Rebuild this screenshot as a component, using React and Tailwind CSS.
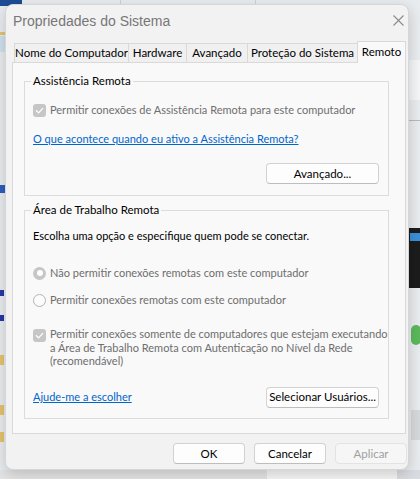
import React from 'react';

const font = "font-['Lato','Liberation_Sans',Arial,sans-serif]";

const Check = () => (
  <svg width="9" height="9" viewBox="0 0 10 10" fill="none">
    <path d="M1.5 5.2 L4 7.6 L8.6 2.6" stroke="white" strokeWidth="1.4" strokeLinecap="round" strokeLinejoin="round" />
  </svg>
);

const Checkbox = () => (
  <span className="w-[13px] h-[13px] shrink-0 rounded-[3px] bg-[#c6c6c6] flex items-center justify-center">
    <Check />
  </span>
);

const Radio = ({ checked }) =>
  checked ? (
    <span className="w-[13px] h-[13px] shrink-0 rounded-full bg-[#c6c6c6] flex items-center justify-center">
      <span className="w-[6px] h-[6px] rounded-full bg-white" />
    </span>
  ) : (
    <span className="w-[13px] h-[13px] shrink-0 rounded-full border border-[#b3b3b3] bg-[#fcfcfc]" />
  );

const Button = ({ children, className = '', disabled }) => (
  <button
    className={`h-[21px] rounded-[4px] border text-[11.5px] leading-none whitespace-nowrap flex items-center justify-center ${
      disabled
        ? 'border-[#e3e3e3] bg-[#f6f6f6] text-[#a0a0a0]'
        : 'border-[#d2d2d2] border-b-[#bdbdbd] bg-[#fdfdfd] text-black'
    } ${className}`}
  >
    {children}
  </button>
);

const Group = ({ title, children, className = '' }) => (
  <div className={`relative border border-[#dcdcdc] pl-[8px] pr-[9px] ${className}`}>
    <span className="absolute -top-[8px] left-[6px] px-[2px] bg-[#f9f9f9] text-[11.5px] leading-[14px] text-black whitespace-nowrap">
      {title}
    </span>
    {children}
  </div>
);

const tabs = [
  { label: 'Nome do Computador', w: 'w-[114px]' },
  { label: 'Hardware', w: 'w-[58px]' },
  { label: 'Avançado', w: 'w-[61px]' },
  { label: 'Proteção do Sistema', w: 'w-[110px]' },
];

export default function App() {
  return (
    <div className={`relative w-[420px] h-[479px] overflow-hidden bg-[#e9ecef] ${font}`}>
      {/* desktop behind the dialog */}
      <div className="absolute left-0 top-0 w-[22px] h-[6px] bg-[#1d4c96]" />
      <div className="absolute left-[120px] top-0 w-px h-[6px] bg-[#c9d3de]" />
      <div className="absolute left-[255px] top-0 w-px h-[6px] bg-[#c9d3de]" />
      <div className="absolute left-0 top-[32px] w-[5px] h-[3px] bg-[#e4c36b]" />
      <div className="absolute left-0 top-[36px] w-[5px] h-[16px] bg-[#cfe0ee]" />
      <div className="absolute left-0 top-[185px] w-[5px] h-[8px] bg-[#2d5fbf]" />
      <div className="absolute left-0 top-[290px] w-[4px] h-[6px] bg-[#2438a8]" />
      <div className="absolute left-0 top-[315px] w-[4px] h-[6px] bg-[#2438a8]" />
      <div className="absolute left-0 top-[355px] w-[4px] h-[10px] bg-[#e4c36b]" />
      <div className="absolute left-0 top-[405px] w-[4px] h-[10px] bg-[#e4c36b]" />
      <div className="absolute left-0 top-[432px] w-[4px] h-[10px] bg-[#e4c36b]" />
      <div className="absolute left-[409px] top-[60px] w-[11px] h-[40px] bg-[#f4f5f7]" />
      <div className="absolute left-[409px] top-[120px] w-[11px] h-px bg-[#b9b9b9]" />
      <div className="absolute left-[409px] top-[228px] w-[11px] h-[60px] bg-[#1c1c1c]" />
      <div className="absolute left-[410px] top-[233px] w-[10px] h-[8px] bg-[#3b8fd6]" />
      <div className="absolute left-[411px] top-[325px] w-[10px] h-[20px] rounded-full bg-[#5cb85c]" />
      <div className="absolute left-[411px] top-[410px] w-[9px] h-[30px] bg-[#d6d9dc]" />
      <div className="absolute left-0 top-[470px] w-[267px] h-[9px] bg-[#e4e4e4]" />
      <div className="absolute left-[267px] top-[470px] w-[130px] h-[9px] bg-[#f6f6f6]" />
      <div className="absolute left-[397px] top-[470px] w-[23px] h-[9px] bg-[#d9dce0]" />

      {/* dialog */}
      <div className="absolute left-[5px] top-[4px] w-[404px] h-[466px] rounded-[8px] bg-[#f2f2f2] border border-[#d6d6d6] shadow-[0_4px_14px_rgba(0,0,0,0.18)] flex flex-col">
        <div className="h-[31px] flex items-center justify-between pl-[7px] pr-[4px]">
          <span className="font-['Liberation_Sans',Arial,sans-serif] text-[14px] text-[#777777] leading-none">
            Propriedades do Sistema
          </span>
          <svg width="11" height="11" viewBox="0 0 11 11">
            <path d="M0.5 0.5 L10.5 10.5 M10.5 0.5 L0.5 10.5" stroke="#8a8a8a" strokeWidth="1.1" />
          </svg>
        </div>

        <div className="mt-[5px] ml-[6px] mr-[2px] flex flex-col">
          <div className="h-[21px] flex items-end pl-[2px]">
            {tabs.map((t) => (
              <div
                key={t.label}
                className={`${t.w} h-[19px] border-t border-l border-[#d9d9d9] bg-[#f0f0f0] text-[11.5px] text-black whitespace-nowrap flex items-center justify-center leading-none`}
              >
                {t.label}
              </div>
            ))}
            <div className="relative z-10 w-[49px] h-[22px] -mb-px border-t border-l border-r border-[#d9d9d9] bg-[#f9f9f9] text-[11.5px] text-black flex items-start justify-center pt-[4px] leading-none">
              Remoto
            </div>
          </div>

          <div className="h-[372px] border border-[#d9d9d9] bg-[#f9f9f9] pl-[11px] pr-[16px] pt-[18px] text-[11px]">
            <Group title="Assistência Remota" className="pt-[21px] pb-[11px]">
              <div className="h-[14px] flex items-center gap-[4px] text-[#6e6e6e] whitespace-nowrap">
                <Checkbox />
                <span>Permitir conexões de Assistência Remota para este computador</span>
              </div>
              <div className="mt-[15px] h-[14px] flex items-center text-[#0066cc] underline whitespace-nowrap">
                O que acontece quando eu ativo a Assistência Remota?
              </div>
              <div className="mt-[17px] flex justify-end">
                <Button className="w-[113px]">Avançado...</Button>
              </div>
            </Group>

            <Group title="Área de Trabalho Remota" className="mt-[14px] pt-[18px] pb-[10px]">
              <div className="h-[14px] flex items-center text-black whitespace-nowrap">
                Escolha uma opção e especifique quem pode se conectar.
              </div>
              <div className="mt-[23px] h-[14px] flex items-center gap-[4px] text-[#6e6e6e] whitespace-nowrap">
                <Radio checked />
                <span>Não permitir conexões remotas com este computador</span>
              </div>
              <div className="mt-[13px] h-[14px] flex items-center gap-[4px] text-[#6e6e6e] whitespace-nowrap">
                <Radio />
                <span>Permitir conexões remotas com este computador</span>
              </div>
              <div className="mt-[20px] flex items-start gap-[4px] leading-[13.5px] text-[#6e6e6e] whitespace-nowrap">
                <span className="mt-[2px]">
                  <Checkbox />
                </span>
                <span>
                  Permitir conexões somente de computadores que estejam executando
                  <br />a Área de Trabalho Remota com Autenticação no Nível da Rede
                  <br />
                  (recomendável)
                </span>
              </div>
              <div className="mt-[19px] flex items-center justify-between">
                <span className="text-[#0066cc] underline">Ajude-me a escolher</span>
                <Button className="w-[113px] h-[20px]">Selecionar Usuários...</Button>
              </div>
            </Group>
          </div>
        </div>

        <div className="mt-[9px] flex justify-end gap-[9px] pr-[1px]">
          <Button className="w-[72px] h-[20px]">OK</Button>
          <Button className="w-[72px] h-[20px]">Cancelar</Button>
          <Button className="w-[72px] h-[20px]" disabled>
            Aplicar
          </Button>
        </div>
      </div>
    </div>
  );
}
